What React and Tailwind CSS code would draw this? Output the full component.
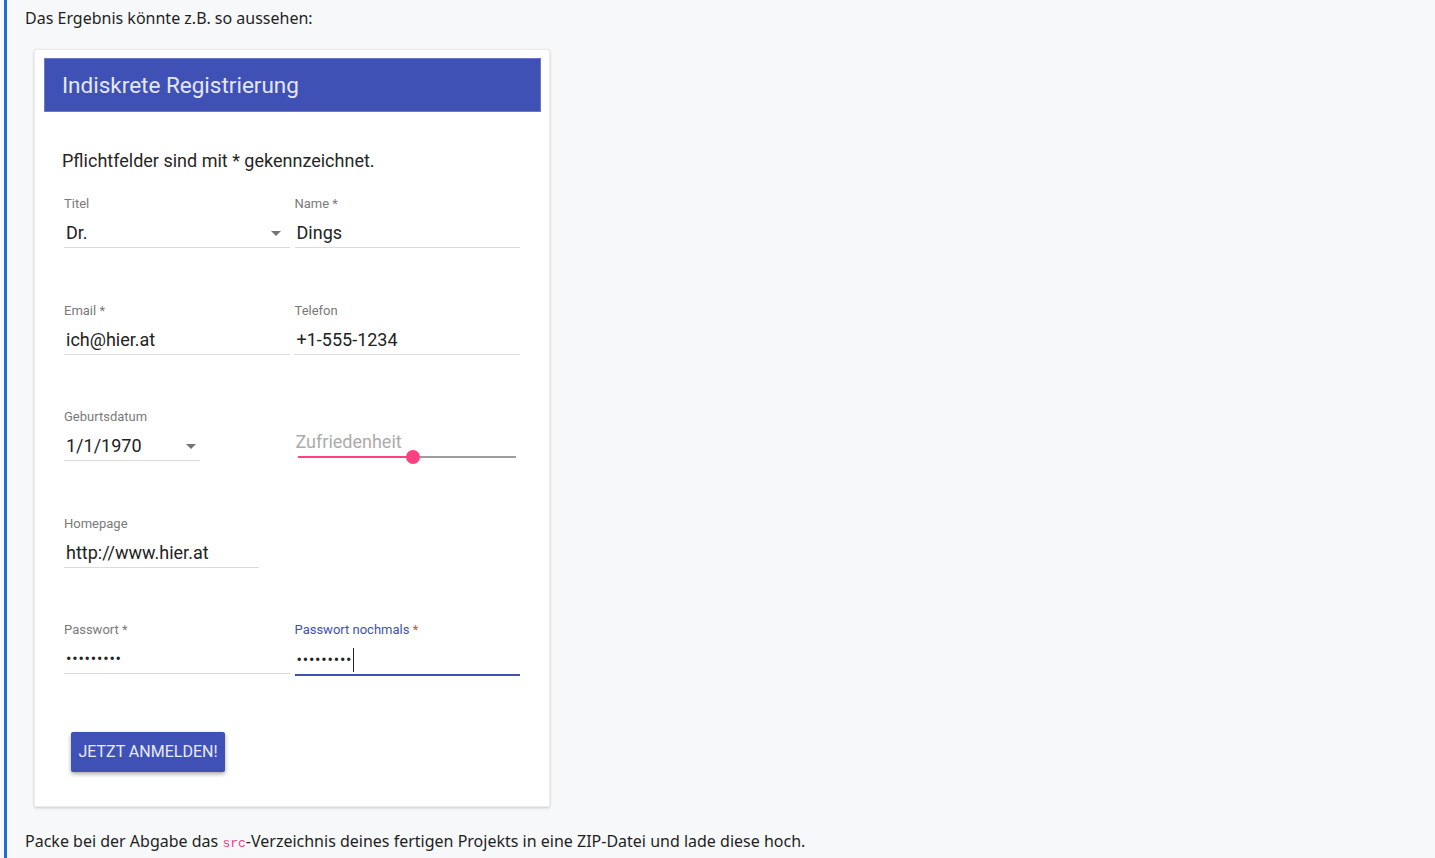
import React from "react";

const roboto = { fontFamily: "Roboto, 'Noto Sans', sans-serif" };

function Arrow() {
  return (
    <svg width="10" height="5" viewBox="0 0 10 5" className="shrink-0">
      <path d="M0 0 L10 0 L5 5 Z" fill="#757575" />
    </svg>
  );
}

function Field({ label, value, required, select, width, focused, password, pr }) {
  return (
    <div className={width ? width : "w-full"}>
      <div
        className={`text-[13px] leading-[16px] pt-[1px] ${focused ? "text-[#3f51b5]" : "text-[#7a7a7a]"}`}
      >
        {label}
        {required && (
          <span className={focused ? "text-[#f44336]" : ""}> *</span>
        )}
      </div>
      <div
        className={`flex items-center justify-between pl-[2px] ${pr || "pr-[4px]"} pt-[10px] ${
          focused ? "pb-[2px] border-b-2 border-[#3f51b5]" : "pb-[3px] border-b border-[#dcdcdc]"
        }`}
      >
        <span
          className={`leading-[22px] text-[#222] flex items-center ${
            password ? "text-[16px] tracking-[0.8px]" : "text-[18px]"
          }`}
        >
          {value}
          {focused && <span className="inline-block w-px h-[24px] bg-[#222] ml-[1px]" />}
        </span>
        {select && <Arrow />}
      </div>
    </div>
  );
}

export default function App() {
  return (
    <div className="min-h-screen bg-[#f7f8fa] pl-1">
      <div
        className="border-l-[3px] border-[#1b6fd1] pl-[18px] pt-[6px] pb-[6px] text-[#1f1f1f]"
        style={{ fontFamily: "'Noto Sans', 'Open Sans', sans-serif" }}
      >
        <p className="text-[16px] leading-[24px]">Das Ergebnis könnte z.B. so aussehen:</p>

        <div
          className="ml-[9px] mt-[19px] w-[516px] bg-white border border-[#ececec] shadow-[0_1px_3px_rgba(0,0,0,0.18)] rounded-[2px] pt-[8px] pb-[34px]"
          style={roboto}
        >
          <div className="ml-[9px] mr-[8px] h-[54px] bg-[#3f51b5] flex items-center pl-[17px] pt-[2px] border border-[#6b78c8]">
            <span className="text-[22.5px] text-[#e4e7f6]">Indiskrete Registrierung</span>
          </div>

          <p className="mt-[37px] ml-[27px] text-[18px] leading-[24px] text-[#262626]">
            Pflichtfelder sind mit * gekennzeichnet.
          </p>

          <div className="ml-[29px] w-[456px] mt-[22px] flex flex-col">
            <div className="grid grid-cols-2 gap-x-[5px] h-[107px]">
              <Field label="Titel" value="Dr." select pr="pr-[9px]" />
              <Field label="Name" value="Dings" required />
            </div>
            <div className="grid grid-cols-2 gap-x-[5px] h-[106px]">
              <Field label="Email" value="ich@hier.at" required />
              <Field label="Telefon" value="+1-555-1234" />
            </div>
            <div className="grid grid-cols-2 gap-x-[5px] h-[107px]">
              <Field label="Geburtsdatum" value="1/1/1970" select width="w-[136px]" pr="pr-[4px]" />
              <div className="pt-[23px] pl-[1px]">
                <div className="text-[18px] leading-[22px] text-[#ababab]">Zufriedenheit</div>
                <div className="relative h-[14px] ml-[2px] w-[218px] -mt-[3px]">
                  <div className="absolute left-0 right-0 top-[6px] h-[2px] bg-[#9e9e9e]" />
                  <div className="absolute left-0 w-[114px] top-[6px] h-[2px] bg-[#ff4081]" />
                  <div className="absolute left-[108px] top-0 w-[14px] h-[14px] rounded-full bg-[#ff4081]" />
                </div>
              </div>
            </div>
            <div className="h-[106px]">
              <Field label="Homepage" value="http://www.hier.at" width="w-[195px]" />
            </div>
            <div className="grid grid-cols-2 gap-x-[5px]">
              <Field label="Passwort" value="•••••••••" required password />
              <Field label="Passwort nochmals" value="•••••••••" required password focused />
            </div>
          </div>

          <button
            className="mt-[56px] ml-[36px] w-[154px] h-[40px] bg-[#3f51b5] text-[#e8eaf6] text-[16px] rounded-[2px] shadow-[0_2px_4px_rgba(0,0,0,0.35)]"
            style={roboto}
          >
            JETZT ANMELDEN!
          </button>
        </div>

        <p className="mt-[22px] text-[16px] leading-[24px]">
          Packe bei der Abgabe das{" "}
          <code
            className="text-[13px] text-[#e83e8c]"
            style={{ fontFamily: "'Liberation Mono', monospace" }}
          >
            src
          </code>
          -Verzeichnis deines fertigen Projekts in eine ZIP-Datei und lade diese hoch.
        </p>
      </div>
    </div>
  );
}
